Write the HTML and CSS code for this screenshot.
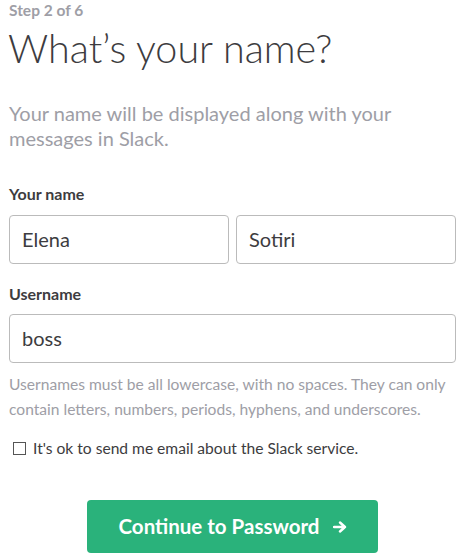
FILE: index.html
```html
<!DOCTYPE html>
<html>
<head>
<meta charset="utf-8">
<link rel="stylesheet" href="styles.css">
</head>
<body>
<div class="page">
  <div class="step">Step 2 of 6</div>
  <h1 class="title">What’s your name?</h1>
  <p class="lead">Your name will be displayed along with your messages in Slack.</p>
  <label class="label">Your name</label>
  <div class="name-row">
    <div class="input">Elena</div>
    <div class="input">Sotiri</div>
  </div>
  <label class="label label-user">Username</label>
  <div class="input">boss</div>
  <p class="help">Usernames must be all lowercase, with no spaces. They can only contain letters, numbers, periods, hyphens, and underscores.</p>
  <div class="check-row">
    <span class="box"></span>
    <span class="check-text">It's ok to send me email about the Slack service.</span>
  </div>
  <div class="actions">
    <button class="btn">Continue to Password
      <svg class="arrow" width="14" height="12" viewBox="0 0 14 12"><path d="M1 6H12M7 1.5L12 6L7 10.5" fill="none" stroke="#fff" stroke-width="2.4" stroke-linecap="round" stroke-linejoin="round"/></svg>
    </button>
  </div>
</div>
</body>
</html>
```
FILE: styles.css
```css
html, body { margin: 0; padding: 0; background: #fff; }
body { font-family: Lato, "Open Sans", sans-serif; color: #3d3c40; }
.page { padding: 0 7px 0 9px; width: 447px; }
.step { font-size: 15.5px; font-weight: 700; color: #9e9ea6; line-height: 18px; margin-top: 1px; }
.title { font-size: 39.5px; font-weight: 300; margin: 4px 0 0 -1px; line-height: 50px; color: #3d3c40; }
.lead { font-size: 20px; line-height: 25px; color: #9e9ea6; margin: 28px 0 0; }
.label { display: block; font-size: 16px; font-weight: 700; line-height: 20px; margin-top: 33px; }
.label-user { margin-top: 20px; }
.name-row { display: flex; gap: 7px; margin-top: 11px; }
.name-row .input { flex: 1; }
.input { box-sizing: border-box; height: 49px; border: 1px solid #bbbbbb; border-radius: 4px; padding: 0 12px; font-size: 20px; line-height: 47px; color: #3d3c40; }
.label-user + .input { margin-top: 10px; }
.help { font-size: 15.6px; line-height: 25px; color: #9e9ea6; margin: 9px 0 0; }
.check-row { display: flex; align-items: center; margin-top: 16px; padding-left: 4px; }
.box { width: 11px; height: 11px; border: 1px solid #555; margin-right: 7px; }
.check-text { font-size: 15.6px; line-height: 20px; color: #3d3c40; }
.actions { display: flex; justify-content: center; margin-top: 42px; padding-right: 1px; }
.btn { width: 291px; height: 53px; background: #2ab27b; border: none; border-radius: 4px; color: #fff; font-family: Lato, sans-serif; font-size: 20.5px; font-weight: 700; display: flex; align-items: center; justify-content: center; gap: 14px; padding: 0 0 2px 2px; }
.arrow { display: block; margin-top: 2px; }
```
